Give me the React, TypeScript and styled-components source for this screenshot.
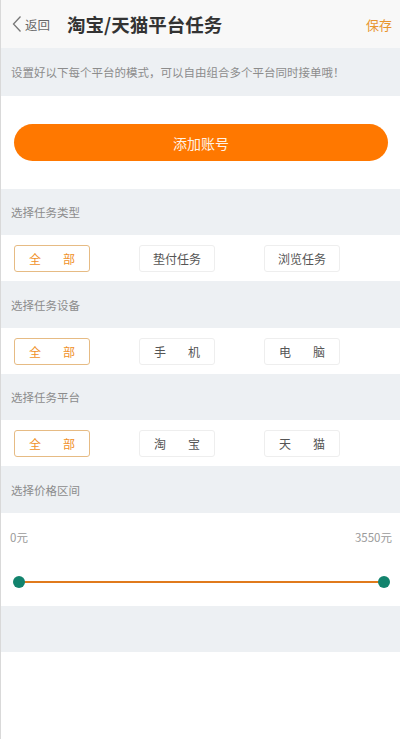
import React from "react";
import styled, { createGlobalStyle } from "styled-components";

const Global = createGlobalStyle`
  html, body { margin: 0; padding: 0; background: #fff; }
  body { font-family: "Noto Sans CJK SC", "Noto Sans", sans-serif; }
`;

const Page = styled.div`
  width: 400px;
  min-height: 739px;
  box-sizing: border-box;
  border-left: 1px solid #d9d9d9;
  background: #fff;
`;

const Header = styled.div`
  height: 48px;
  display: flex;
  align-items: center;
  padding: 0 8px 0 11px;
  background: #f8f8f8;
`;

const Back = styled.div`
  display: flex;
  align-items: center;
  gap: 3px;
  color: #666;
  font-size: 12.5px;
  width: 55px;
`;

const Title = styled.div`
  flex: 1;
  font-size: 18.5px;
  font-weight: 700;
  color: #333;
`;

const Save = styled.div`
  color: #e8962e;
  font-size: 13px;
`;

const Band = styled.div<{ $h?: number }>`
  height: ${(p) => p.$h ?? 46}px;
  background: #edf0f3;
  display: flex;
  align-items: center;
  padding-left: 10px;
  font-size: 11.5px;
  color: #8c8c8c;
`;

const ButtonWrap = styled.div`
  height: 93px;
  display: flex;
  align-items: center;
  padding: 0 12px 0 13px;
`;

const Primary = styled.div`
  flex: 1;
  height: 37px;
  border-radius: 19px;
  background: #ff7800;
  color: #fff3e6;
  font-size: 14px;
  display: flex;
  align-items: center;
  justify-content: center;
`;

const OptionRow = styled.div`
  height: 46px;
  display: flex;
  align-items: center;
  gap: 49px;
  padding-left: 13px;
`;

const Option = styled.div<{ $active?: boolean; $spread?: boolean }>`
  width: 76px;
  height: 27px;
  box-sizing: border-box;
  border-radius: 3px;
  border: 1px solid ${(p) => (p.$active ? "#e6bb84" : "#eeeeee")};
  color: ${(p) => (p.$active ? "#f0912a" : "#555")};
  font-size: 12px;
  display: flex;
  align-items: center;
  justify-content: center;
  gap: ${(p) => (p.$spread ? "22px" : "0")};
`;

const RangeBlock = styled.div`
  height: 93px;
  padding: 0 8px 0 9px;
  display: flex;
  flex-direction: column;
`;

const RangeLabels = styled.div`
  display: flex;
  justify-content: space-between;
  font-size: 11.5px;
  color: #9a9a9a;
  margin-top: 16px;
`;

const Track = styled.div`
  position: relative;
  margin: 36px 8px 0 9px;
  height: 2px;
  background: #e07a1c;
`;

const Thumb = styled.div<{ $right?: boolean }>`
  position: absolute;
  top: -5px;
  ${(p) => (p.$right ? "right: -6px;" : "left: -6px;")}
  width: 12px;
  height: 12px;
  border-radius: 50%;
  background: #12836d;
`;

const Chars = ({ t }: { t: string }) => (
  <>
    {t.split("").map((c, i) => (
      <span key={i}>{c}</span>
    ))}
  </>
);

const Row = ({ items }: { items: string[] }) => (
  <OptionRow>
    {items.map((it, i) => {
      const spread = it.length === 2;
      return (
        <Option key={i} $active={i === 0} $spread={spread}>
          {spread ? <Chars t={it} /> : it}
        </Option>
      );
    })}
  </OptionRow>
);

export default function App() {
  return (
    <Page>
      <Global />
      <Header>
        <Back>
          <svg width="10" height="18" viewBox="0 0 10 18">
            <path d="M8.5 1.5 L1.5 9 L8.5 16.5" fill="none" stroke="#777" strokeWidth="1.3" />
          </svg>
          <span>返回</span>
        </Back>
        <Title>淘宝/天猫平台任务</Title>
        <Save>保存</Save>
      </Header>
      <Band $h={48}>设置好以下每个平台的模式，可以自由组合多个平台同时接单哦！</Band>
      <ButtonWrap>
        <Primary>添加账号</Primary>
      </ButtonWrap>
      <Band>选择任务类型</Band>
      <Row items={["全部", "垫付任务", "浏览任务"]} />
      <Band $h={47}>选择任务设备</Band>
      <Row items={["全部", "手机", "电脑"]} />
      <Band>选择任务平台</Band>
      <Row items={["全部", "淘宝", "天猫"]} />
      <Band $h={47}>选择价格区间</Band>
      <RangeBlock>
        <RangeLabels>
          <span>0元</span>
          <span>3550元</span>
        </RangeLabels>
        <Track>
          <Thumb />
          <Thumb $right />
        </Track>
      </RangeBlock>
      <Band />
    </Page>
  );
}
